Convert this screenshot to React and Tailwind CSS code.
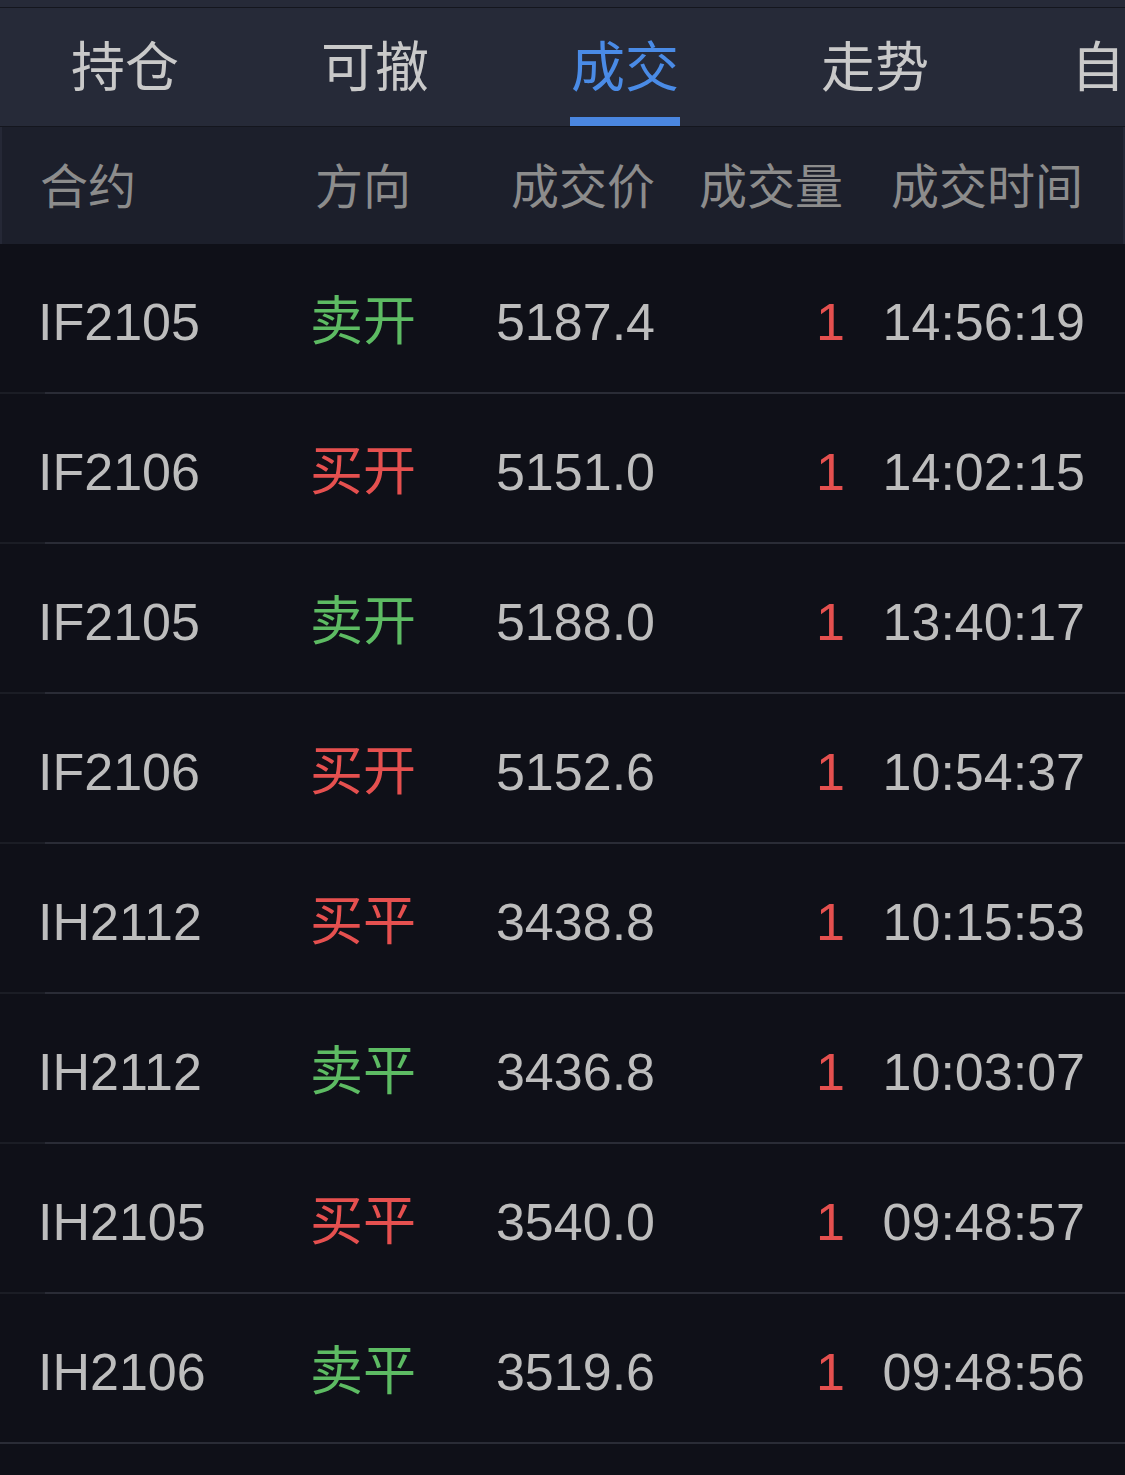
import React from "react";

const tabs = ["持仓", "可撤", "成交", "走势", "自选"];
const active = 2;

const trades = [
  { code: "IF2105", dir: "卖开", price: "5187.4", qty: "1", time: "14:56:19" },
  { code: "IF2106", dir: "买开", price: "5151.0", qty: "1", time: "14:02:15" },
  { code: "IF2105", dir: "卖开", price: "5188.0", qty: "1", time: "13:40:17" },
  { code: "IF2106", dir: "买开", price: "5152.6", qty: "1", time: "10:54:37" },
  { code: "IH2112", dir: "买平", price: "3438.8", qty: "1", time: "10:15:53" },
  { code: "IH2112", dir: "卖平", price: "3436.8", qty: "1", time: "10:03:07" },
  { code: "IH2105", dir: "买平", price: "3540.0", qty: "1", time: "09:48:57" },
  { code: "IH2106", dir: "卖平", price: "3519.6", qty: "1", time: "09:48:56" },
];

const font = {
  fontFamily: '"Liberation Sans", "Noto Sans CJK SC", sans-serif',
};

function App() {
  return (
    <div className="w-[1125px] h-[1475px] bg-[#0f1018] overflow-hidden" style={font}>
      {/* tab bar */}
      <div className="bg-[#262a38] border-t-[7px] border-[#262a38]">
        <div className="h-[1px] bg-[#14161e]" />
        <div className="flex h-[119px] border-b border-[#14161e] overflow-hidden">
          {tabs.map((t, i) => (
            <div key={t} className="relative w-[250px] shrink-0 flex justify-center">
              <span
                className={`mt-[20px] text-[54px] leading-[80px] ${
                  i === active ? "text-[#4a8be6]" : "text-[#c9c9c9]"
                }`}
              >
                {t}
              </span>
              {i === active && (
                <div className="absolute bottom-0 left-[70px] w-[110px] h-[9px] bg-[#4a86e0]" />
              )}
            </div>
          ))}
        </div>
      </div>

      {/* header */}
      <div className="flex items-center h-[117px] bg-[#1c1f2b] pt-[4px] pl-[38px] pr-[40px] text-[48px] text-[#8c8c8c] border-x-[2px] border-[#252836]">
        <div className="w-[270px]">合约</div>
        <div className="w-[135px] pl-[5px]">方向</div>
        <div className="w-[210px] text-right">成交价</div>
        <div className="w-[188px] text-right">成交量</div>
        <div className="flex-1 text-right">成交时间</div>
      </div>

      {/* rows */}
      {trades.map((r, i) => (
        <div key={i}>
          <div className="flex items-center h-[148px] pt-[8px] pl-[38px] pr-[40px] text-[52px] text-[#bdbdbd]">
            <div className="w-[272px]">{r.code}</div>
            <div
              className={`w-[135px] text-[53px] ${
                r.dir.startsWith("卖") ? "text-[#5dbb63]" : "text-[#e5504f]"
              }`}
            >
              {r.dir}
            </div>
            <div className="w-[210px] text-right">{r.price}</div>
            <div className="w-[190px] text-right text-[#e5504f]">{r.qty}</div>
            <div className="flex-1 text-right">{r.time}</div>
          </div>
          <div className="flex h-[2px]">
            <div className={`w-[45px] ${i === trades.length - 1 ? "bg-[#2a2c36]" : "bg-[#1b1d25]"}`} />
            <div className="flex-1 bg-[#2a2c36]" />
          </div>
        </div>
      ))}
    </div>
  );
}

export default App;
